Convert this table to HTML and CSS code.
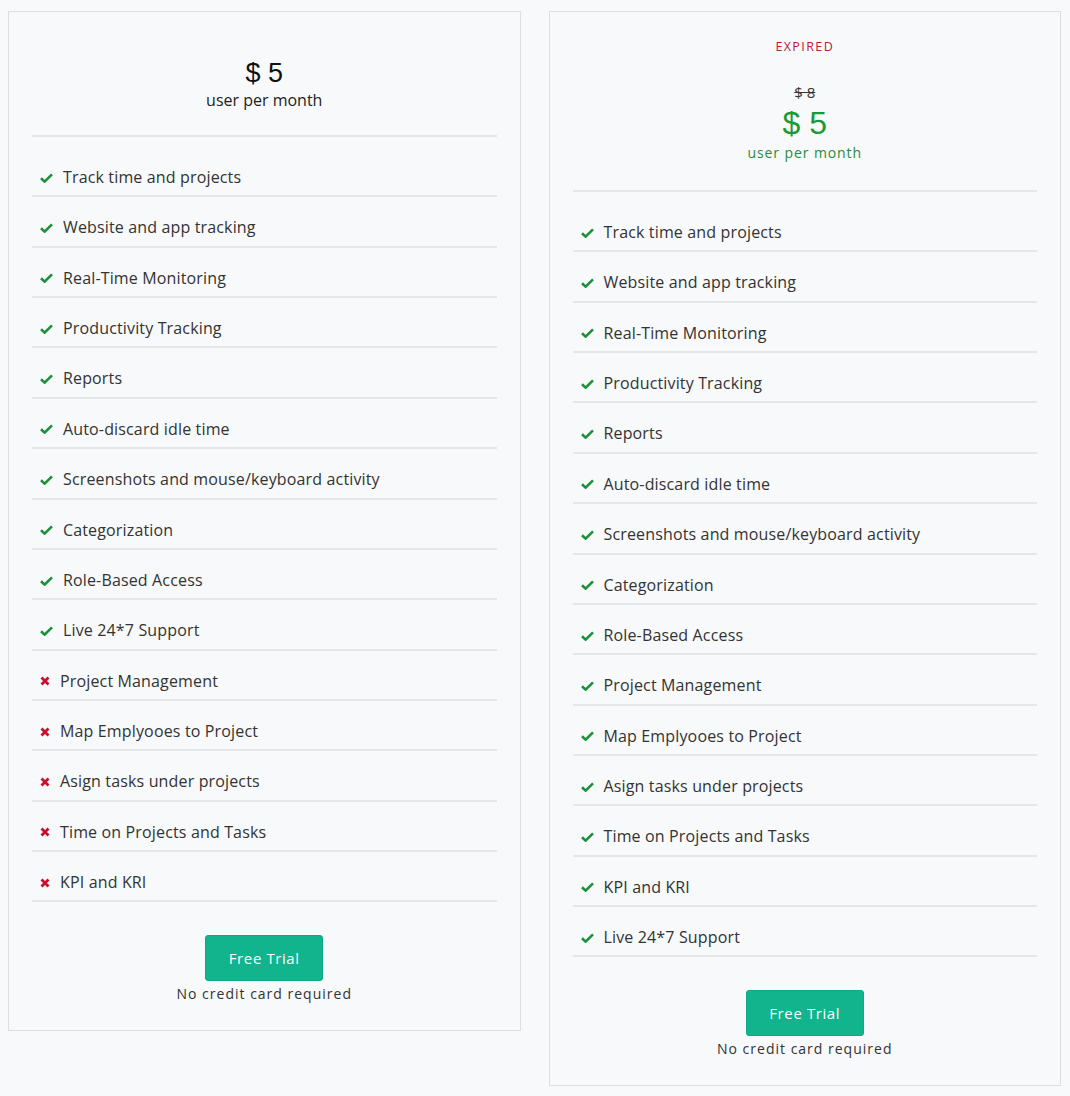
FILE: index.html
```html
<!DOCTYPE html>
<html lang="en">
<head>
  <meta charset="UTF-8">
  <title>Pricing</title>
  <link rel="stylesheet" href="styles.css">
</head>
<body>
  <div class="plans">
    <div class="plan">
      <div class="plan-head">
        <div class="price">$ 5</div>
        <div class="per">user per month</div>
      </div>
      <ul class="features">
        <li><span class="ic ok"></span>Track time and projects</li>
        <li><span class="ic ok"></span>Website and app tracking</li>
        <li><span class="ic ok"></span>Real-Time Monitoring</li>
        <li><span class="ic ok"></span>Productivity Tracking</li>
        <li><span class="ic ok"></span>Reports</li>
        <li><span class="ic ok"></span>Auto-discard idle time</li>
        <li><span class="ic ok"></span>Screenshots and mouse/keyboard activity</li>
        <li><span class="ic ok"></span>Categorization</li>
        <li><span class="ic ok"></span>Role-Based Access</li>
        <li><span class="ic ok"></span>Live 24*7 Support</li>
        <li><span class="ic no"></span>Project Management</li>
        <li><span class="ic no"></span>Map Emplyooes to Project</li>
        <li><span class="ic no"></span>Asign tasks under projects</li>
        <li><span class="ic no"></span>Time on Projects and Tasks</li>
        <li><span class="ic no"></span>KPI and KRI</li>
      </ul>
      <div class="plan-foot">
        <button class="trial">Free Trial</button>
        <div class="note">No credit card required</div>
      </div>
    </div>

    <div class="plan">
      <div class="plan-head">
        <div class="expired">EXPIRED</div>
        <div class="old-price">$ 8</div>
        <div class="price green">$ 5</div>
        <div class="per green">user per month</div>
      </div>
      <ul class="features">
        <li><span class="ic ok"></span>Track time and projects</li>
        <li><span class="ic ok"></span>Website and app tracking</li>
        <li><span class="ic ok"></span>Real-Time Monitoring</li>
        <li><span class="ic ok"></span>Productivity Tracking</li>
        <li><span class="ic ok"></span>Reports</li>
        <li><span class="ic ok"></span>Auto-discard idle time</li>
        <li><span class="ic ok"></span>Screenshots and mouse/keyboard activity</li>
        <li><span class="ic ok"></span>Categorization</li>
        <li><span class="ic ok"></span>Role-Based Access</li>
        <li><span class="ic ok"></span>Project Management</li>
        <li><span class="ic ok"></span>Map Emplyooes to Project</li>
        <li><span class="ic ok"></span>Asign tasks under projects</li>
        <li><span class="ic ok"></span>Time on Projects and Tasks</li>
        <li><span class="ic ok"></span>KPI and KRI</li>
        <li><span class="ic ok"></span>Live 24*7 Support</li>
      </ul>
      <div class="plan-foot">
        <button class="trial">Free Trial</button>
        <div class="note">No credit card required</div>
      </div>
    </div>
  </div>

  <script>
    // fill the check / cross icons
    var check = '<svg width="13" height="10" viewBox="0 0 13 10"><path d="M1 5.2 L4.6 8.6 L12 1.4" fill="none" stroke="#1b8f3a" stroke-width="2.6"/></svg>';
    var cross = '<svg width="10" height="10" viewBox="0 0 10 10"><path d="M1.5 1.5 L8.5 8.5 M8.5 1.5 L1.5 8.5" fill="none" stroke="#c8102e" stroke-width="2.8"/></svg>';
    document.querySelectorAll('.ic.ok').forEach(function(el) { el.innerHTML = check; });
    document.querySelectorAll('.ic.no').forEach(function(el) { el.innerHTML = cross; });
  </script>
</body>
</html>
```

FILE: styles.css
```css
body {
  margin: 0;
  padding: 11px 9px 0 8px;
  background: #f8f9fa;
  font-family: "Open Sans", Arial, sans-serif;
  color: #333;
}

.plans {
  display: flex;
  align-items: flex-start;
  gap: 28px;
}

.plan {
  flex: 1;
  border: 1px solid #dcdfe2;
  background: #f8f9fa;
  padding: 0 23px 0 23px;
}

.plan-head {
  text-align: center;
  border-bottom: 2px solid #e4e6e9;
  padding: 45px 0 24px;
}

.price {
  font-family: "Liberation Sans", Arial, sans-serif;
  font-size: 27px;
  line-height: 32px;
  color: #111;
}

.per {
  font-size: 16px;
  line-height: 22px;
  color: #222;
}

.expired {
  color: #b22234;
  font-size: 12.5px;
  letter-spacing: 1.4px;
  line-height: 16px;
  margin: -18px 0 28px;
}

.old-price {
  font-size: 15px;
  line-height: 18px;
  text-decoration: line-through;
  color: #333;
}

.price.green {
  font-size: 32px;
  line-height: 38px;
  margin-top: 3px;
  color: #1a9a35;
}

.per.green {
  color: #2a8a3a;
  font-size: 14px;
  letter-spacing: 0.9px;
  margin-bottom: 2px;
}

.features {
  list-style: none;
  margin: 0;
  padding: 10px 0 0;
}

.features li {
  display: flex;
  align-items: center;
  padding: 19px 8px 6px;
  line-height: 23.36px;
  font-size: 16px;
  letter-spacing: 0.15px;
  border-bottom: 2px solid #e4e6e9;
  color: #333;
}

.ic {
  display: inline-flex;
  margin-right: 10px;
}

.plan-foot {
  text-align: center;
  padding: 33px 0 26px;
}

.trial {
  background: #11b48c;
  color: #fff;
  border: 1px solid #0ea882;
  border-radius: 3px;
  font-family: inherit;
  font-size: 15px;
  font-weight: 500;
  letter-spacing: 0.6px;
  width: 118px;
  height: 46px;
  cursor: pointer;
}

.note {
  font-size: 14px;
  letter-spacing: 1px;
  color: #333;
  line-height: 20px;
  margin-top: 3px;
}
```
